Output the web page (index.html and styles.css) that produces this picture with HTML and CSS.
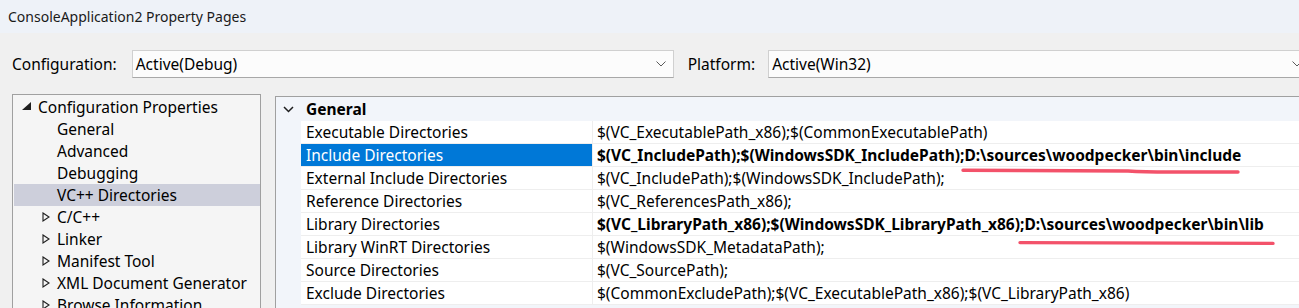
FILE: index.html
```html
<!DOCTYPE html>
<html>
<head>
<meta charset="utf-8">
<link rel="stylesheet" href="styles.css">
</head>
<body>
<div class="window">
  <div class="titlebar">ConsoleApplication2 Property Pages</div>
  <div class="toolbar">
    <span class="label">Configuration:</span>
    <div class="combo"><span>Active(Debug)</span><svg class="chev" width="10" height="6" viewBox="0 0 10 6"><path d="M0.5 0.5 L5 5 L9.5 0.5" fill="none" stroke="#5a5a5a" stroke-width="1"/></svg></div>
    <span class="label platform">Platform:</span>
    <div class="combo"><span>Active(Win32)</span><svg class="chev" width="10" height="6" viewBox="0 0 10 6"><path d="M0.5 0.5 L5 5 L9.5 0.5" fill="none" stroke="#5a5a5a" stroke-width="1"/></svg></div>
  </div>
  <div class="main">
    <div class="tree">
      <div class="node root"><svg class="tri" width="9" height="8" viewBox="0 0 9 8"><polygon points="9,0 9,8 0,8" fill="#1e1e1e"/></svg>Configuration Properties</div>
      <div class="node child">General</div>
      <div class="node child">Advanced</div>
      <div class="node child">Debugging</div>
      <div class="node child selected">VC++ Directories</div>
      <div class="node child"><svg class="tri-c" width="8" height="10" viewBox="0 0 8 10"><polygon points="1,1 7,5 1,9" fill="none" stroke="#1e1e1e" stroke-width="1.1"/></svg>C/C++</div>
      <div class="node child"><svg class="tri-c" width="8" height="10" viewBox="0 0 8 10"><polygon points="1,1 7,5 1,9" fill="none" stroke="#1e1e1e" stroke-width="1.1"/></svg>Linker</div>
      <div class="node child"><svg class="tri-c" width="8" height="10" viewBox="0 0 8 10"><polygon points="1,1 7,5 1,9" fill="none" stroke="#1e1e1e" stroke-width="1.1"/></svg>Manifest Tool</div>
      <div class="node child"><svg class="tri-c" width="8" height="10" viewBox="0 0 8 10"><polygon points="1,1 7,5 1,9" fill="none" stroke="#1e1e1e" stroke-width="1.1"/></svg>XML Document Generator</div>
      <div class="node child"><svg class="tri-c" width="8" height="10" viewBox="0 0 8 10"><polygon points="1,1 7,5 1,9" fill="none" stroke="#1e1e1e" stroke-width="1.1"/></svg>Browse Information</div>
    </div>
    <div class="grid">
      <div class="section"><svg class="sec-chev" width="11" height="7" viewBox="0 0 11 7"><path d="M1 1 L5.5 5.5 L10 1" fill="none" stroke="#1e1e1e" stroke-width="1.5"/></svg>General</div>
      <div class="row"><div class="name">Executable Directories</div><div class="value">$(VC_ExecutablePath_x86);$(CommonExecutablePath)</div></div>
      <div class="row sel"><div class="name">Include Directories</div><div class="value bold">$(VC_IncludePath);$(WindowsSDK_IncludePath);D:\sources\woodpecker\bin\include</div></div>
      <div class="row"><div class="name">External Include Directories</div><div class="value">$(VC_IncludePath);$(WindowsSDK_IncludePath);</div></div>
      <div class="row"><div class="name">Reference Directories</div><div class="value">$(VC_ReferencesPath_x86);</div></div>
      <div class="row"><div class="name">Library Directories</div><div class="value bold">$(VC_LibraryPath_x86);$(WindowsSDK_LibraryPath_x86);D:\sources\woodpecker\bin\lib</div></div>
      <div class="row"><div class="name">Library WinRT Directories</div><div class="value">$(WindowsSDK_MetadataPath);</div></div>
      <div class="row"><div class="name">Source Directories</div><div class="value">$(VC_SourcePath);</div></div>
      <div class="row"><div class="name">Exclude Directories</div><div class="value">$(CommonExcludePath);$(VC_ExecutablePath_x86);$(VC_LibraryPath_x86)</div></div>
    </div>
  </div>
  <svg class="marks" width="1299" height="308" viewBox="0 0 1299 308">
    <path d="M963 170.3 C1020 170.6 1100 170.8 1128 171 C1140 171.8 1150 172 1170 172 L1238 172" fill="none" stroke="#f3526a" stroke-width="3.4" stroke-linecap="round"/>
    <path d="M1020 242.6 L1273 243.4" fill="none" stroke="#f3526a" stroke-width="3.4" stroke-linecap="round"/>
  </svg>
</div>
</body>
</html>
```

FILE: styles.css
```css
html, body {
  margin: 0;
  padding: 0;
  overflow: hidden;
}
body {
  width: 1299px;
  height: 308px;
  background: #f0f0f0;
  font-family: "Noto Sans", "Open Sans", sans-serif;
  color: #000;
}
.window {
  position: relative;
  width: 1299px;
  height: 308px;
  overflow: hidden;
}
.titlebar {
  height: 33px;
  line-height: 33px;
  padding-left: 8px;
  background: #eef2f8;
  font-size: 14px;
  color: #1a1a1a;
}
.toolbar {
  display: flex;
  align-items: center;
  padding: 17px 0 16px 12px;
  gap: 15px;
  font-size: 15.5px;
  white-space: nowrap;
}
.label.platform {
  margin-left: -1px;
  margin-right: -2px;
}
.combo {
  flex: none;
  box-sizing: border-box;
  width: 542px;
  height: 28px;
  border: 1px solid #d0d0d0;
  border-bottom-color: #a8a8a8;
  background: #fcfcfc;
  display: flex;
  align-items: center;
  justify-content: space-between;
  padding: 0 6px 0 3px;
}
.combo span {
  line-height: 26px;
}
.chev {
  display: block;
  margin-right: 1px;
}
.main {
  display: flex;
  gap: 14px;
  padding-left: 12px;
  font-size: 15.5px;
  white-space: nowrap;
}
.tree {
  flex: none;
  width: 249px;
  height: 240px;
  box-sizing: border-box;
  border: 1px solid #a0a0a0;
  background: #f5f5f5;
  padding: 1px 0 0 1px;
  overflow: hidden;
}
.node {
  box-sizing: border-box;
  height: 22px;
  line-height: 22px;
  display: flex;
  align-items: center;
  width: 246px;
}
.node.root {
  padding-left: 8px;
}
.tri {
  margin-right: 7px;
  position: relative;
  top: -1px;
}
.node.child {
  padding-left: 43px;
}
.node.child .tri-c {
  margin-left: -15px;
  margin-right: 7px;
}
.node.selected {
  background: #cdcfdb;
}
.grid {
  flex: 1;
  margin-top: 2px;
  border-top: 1px solid #a0a0a0;
  border-left: 1px solid #a0a0a0;
  background: #f2f5fa;
  height: 240px;
  min-width: 1100px;
}
.section {
  height: 24px;
  display: flex;
  align-items: center;
  font-weight: bold;
  padding-left: 7px;
}
.sec-chev {
  margin-right: 12px;
}
.row {
  margin-left: 25px;
  display: grid;
  grid-template-columns: 292px 1fr;
  height: 23px;
  box-sizing: border-box;
  border-bottom: 1px solid #eeeeee;
  background: #fff;
  line-height: 22px;
}
.name {
  padding-left: 5px;
  border-right: 1px solid #eeeeee;
}
.value {
  padding-left: 4px;
}
.bold {
  font-weight: bold;
}
.row.sel .name {
  background: #0078d7;
  color: #fff;
}
.marks {
  position: absolute;
  left: 0;
  top: 0;
  pointer-events: none;
}
```
